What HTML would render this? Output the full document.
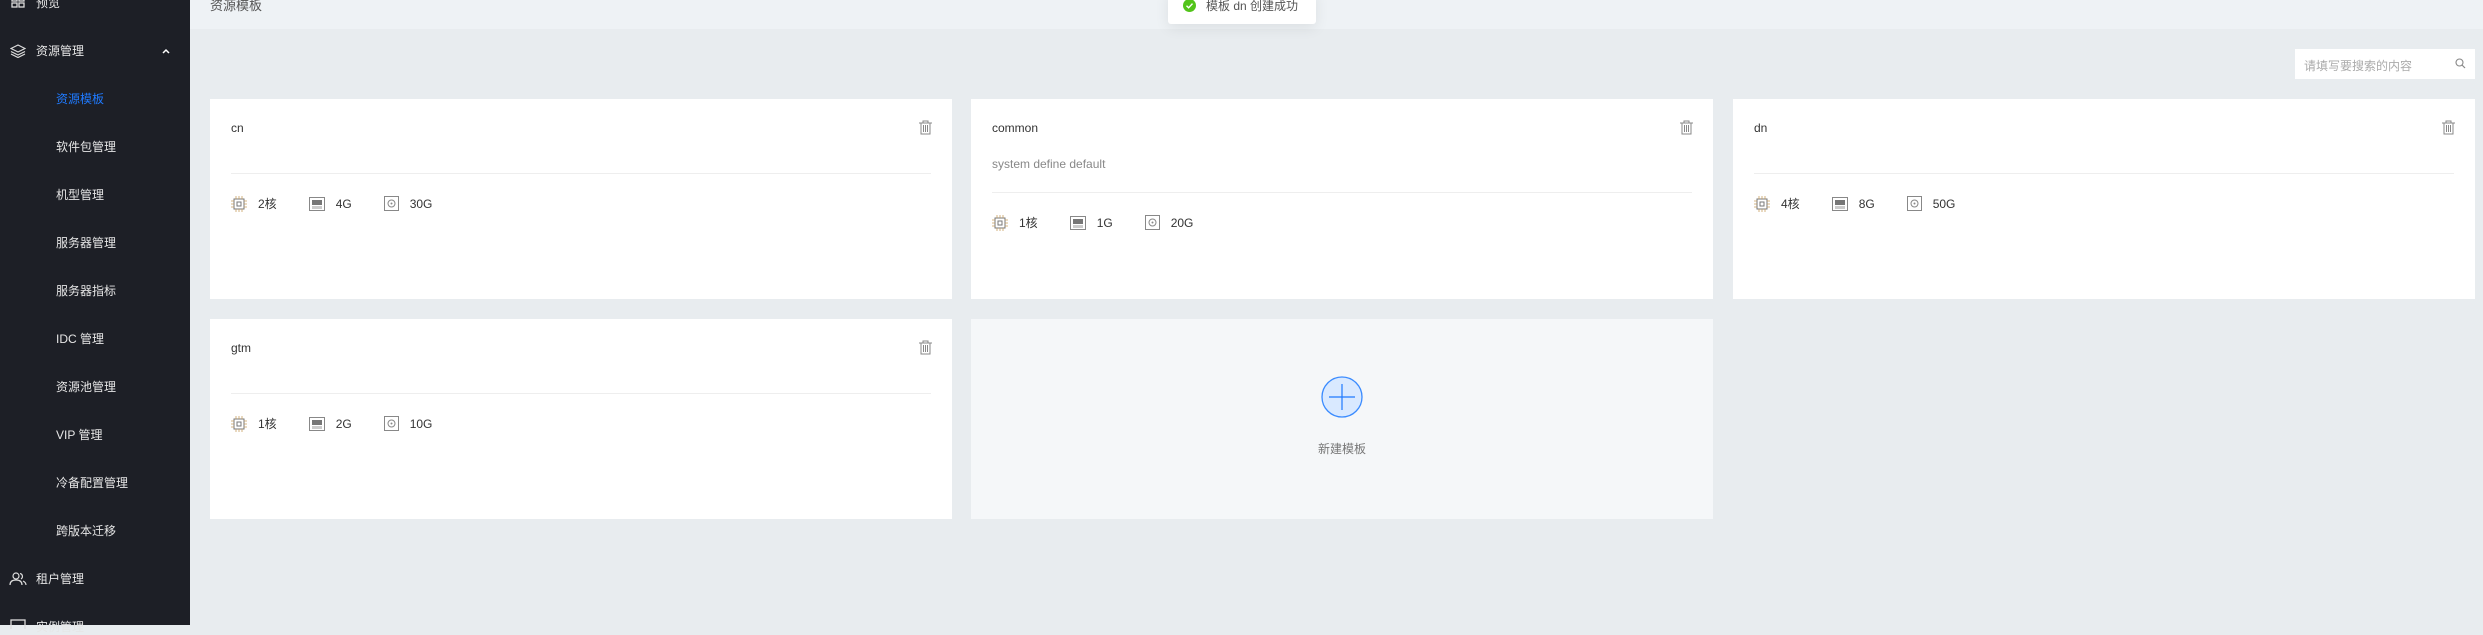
<!DOCTYPE html>
<html><head><meta charset="utf-8"><style>
*{box-sizing:border-box;margin:0;padding:0}
body{width:2483px;height:625px;overflow:hidden;background:#e8ecef;font-family:"Liberation Sans","Noto Sans CJK SC",sans-serif;font-size:12px;color:#333;position:relative}
.side{position:absolute;left:0;top:0;width:190px;height:625px;background:#1d1f26;color:#e6e6e6}
.side .it{position:absolute;left:56px;font-size:12px;line-height:16px;white-space:nowrap}
.side .top{left:36px}
.hdr{position:absolute;left:190px;top:0;width:2293px;height:29px;background:#eef2f5}
.hdr span{position:absolute;left:20px;top:-5px;font-size:13px;color:#555}
.card{position:absolute;background:#fff}
.card .t{position:absolute;left:21px;top:22px;font-size:12px;color:#333}
.card .d{position:absolute;left:21px;top:58px;font-size:12px;color:#888}
.card .hr{position:absolute;left:21px;right:21px;height:1px;background:#eee}
.card .sp{position:absolute;left:21px;display:flex;align-items:center;font-size:12px;color:#333}
.sp svg{margin-right:11px}
.sp .g{margin-right:32px}
.trash{position:absolute;right:20px;top:21px}
</style></head><body>
<div class="side">
<svg style="position:absolute;left:11px;top:-2px" width="14" height="10" viewBox="0 0 14 10"><rect x="1" y="0" width="5" height="3" fill="none" stroke="#ddd" stroke-width="1.3"/><rect x="8" y="0" width="5" height="3" fill="none" stroke="#ddd" stroke-width="1.3"/><rect x="1" y="5" width="5" height="4" fill="none" stroke="#ddd" stroke-width="1.3"/><rect x="8" y="5" width="5" height="4" fill="none" stroke="#ddd" stroke-width="1.3"/></svg>
<div class="it top" style="top:-5px">预览</div>
<svg style="position:absolute;left:10px;top:44px" width="16" height="14" viewBox="0 0 16 14"><path d="M8 1L15 4.5 8 8 1 4.5Z M1 7.5L8 11 15 7.5 M1 10L8 13.5 15 10" fill="none" stroke="#ddd" stroke-width="1.2"/></svg>
<div class="it top" style="top:43px">资源管理</div>
<svg style="position:absolute;left:162px;top:48px" width="8" height="6" viewBox="0 0 8 6"><path d="M1 5L4 2 7 5" fill="none" stroke="#fff" stroke-width="1.5"/></svg>
<div class="it" style="top:91px;color:#1f7aff">资源模板</div>
<div class="it" style="top:139px">软件包管理</div>
<div class="it" style="top:187px">机型管理</div>
<div class="it" style="top:235px">服务器管理</div>
<div class="it" style="top:283px">服务器指标</div>
<div class="it" style="top:331px">IDC 管理</div>
<div class="it" style="top:379px">资源池管理</div>
<div class="it" style="top:427px">VIP 管理</div>
<div class="it" style="top:475px">冷备配置管理</div>
<div class="it" style="top:523px">跨版本迁移</div>
<svg style="position:absolute;left:9px;top:572px" width="18" height="14" viewBox="0 0 18 14"><circle cx="7" cy="4" r="3" fill="none" stroke="#ddd" stroke-width="1.2"/><path d="M1 13C1 9 4 8 7 8S13 9 13 13 M11 1.5A3 3 0 0 1 12 7 M14 9C16 10 17 11 17 13" fill="none" stroke="#ddd" stroke-width="1.2"/></svg>
<div class="it top" style="top:571px">租户管理</div>
<svg style="position:absolute;left:10px;top:619px" width="16" height="10" viewBox="0 0 16 10"><rect x="1" y="1" width="14" height="12" fill="none" stroke="#ddd" stroke-width="1.3"/></svg>
<div class="it top" style="top:619px">实例管理</div>
</div>
<div class="hdr"><span>资源模板</span></div>
<div style="position:absolute;left:1168px;top:-10px;width:148px;height:34px;background:#fff;border-radius:3px;box-shadow:0 4px 14px rgba(0,0,0,.08);white-space:nowrap"><svg style="position:absolute;left:15px;top:9px" width="13" height="13" viewBox="0 0 13 13"><circle cx="6.5" cy="6.5" r="6.5" fill="#52c41a"/><path d="M3.5 6.8L5.6 8.8 9.5 4.6" fill="none" stroke="#fff" stroke-width="1.4"/></svg><span style="position:absolute;left:38px;top:7px;color:#555">模板 dn 创建成功</span></div>
<div style="position:absolute;left:2295px;top:49px;width:180px;height:30px;background:#fff"><span style="position:absolute;left:9px;top:8px;color:#aaa;font-size:12px;white-space:nowrap">请填写要搜索的内容</span><svg style="position:absolute;left:160px;top:9px" width="11" height="11" viewBox="0 0 11 11"><circle cx="4.5" cy="4.5" r="3.5" fill="none" stroke="#888" stroke-width="1.1"/><path d="M7 7L10 10" stroke="#888" stroke-width="1.2"/></svg></div>

<div class="card" style="left:210px;top:99px;width:742px;height:200px">
<div class="t">cn</div><div class="hr" style="top:74px"></div>
<div class="sp" style="top:96px">
<svg width="16" height="16" viewBox="0 0 16 16"><rect x="3" y="3" width="10" height="10" fill="none" stroke="#777"/><rect x="6" y="6" width="4" height="4" fill="none" stroke="#777"/><path d="M5 0v3M8 0v3M11 0v3M5 13v3M8 13v3M11 13v3M0 5h3M0 8h3M0 11h3M13 5h3M13 8h3M13 11h3" stroke="#c9a060" stroke-width=".8"/></svg><span class="g">2核</span>
<svg width="16" height="14" viewBox="0 0 16 14"><rect x=".5" y=".5" width="15" height="13" fill="none" stroke="#888"/><rect x="3" y="3" width="10" height="5" fill="#777"/><path d="M4 9v3M6 9v3M8 9v3M10 9v3M12 9v3" stroke="#999"/></svg><span class="g">4G</span>
<svg width="15" height="15" viewBox="0 0 15 15"><rect x=".5" y=".5" width="14" height="14" fill="none" stroke="#888"/><circle cx="7.5" cy="7.5" r="3.5" fill="none" stroke="#888"/><circle cx="7.5" cy="7.5" r="1" fill="#888"/></svg><span>30G</span>
</div>
<svg class="trash" width="13" height="15" viewBox="0 0 13 15"><path d="M0 3h13M4 3V1h5v2M2 3v11h9V3M4.5 5v7M6.5 5v7M8.5 5v7" fill="none" stroke="#888" stroke-width="1"/></svg>
</div>

<div class="card" style="left:971px;top:99px;width:742px;height:200px">
<div class="t">common</div><div class="d">system define default</div><div class="hr" style="top:93px"></div>
<div class="sp" style="top:115px">
<svg width="16" height="16" viewBox="0 0 16 16"><rect x="3" y="3" width="10" height="10" fill="none" stroke="#777"/><rect x="6" y="6" width="4" height="4" fill="none" stroke="#777"/><path d="M5 0v3M8 0v3M11 0v3M5 13v3M8 13v3M11 13v3M0 5h3M0 8h3M0 11h3M13 5h3M13 8h3M13 11h3" stroke="#c9a060" stroke-width=".8"/></svg><span class="g">1核</span>
<svg width="16" height="14" viewBox="0 0 16 14"><rect x=".5" y=".5" width="15" height="13" fill="none" stroke="#888"/><rect x="3" y="3" width="10" height="5" fill="#777"/><path d="M4 9v3M6 9v3M8 9v3M10 9v3M12 9v3" stroke="#999"/></svg><span class="g">1G</span>
<svg width="15" height="15" viewBox="0 0 15 15"><rect x=".5" y=".5" width="14" height="14" fill="none" stroke="#888"/><circle cx="7.5" cy="7.5" r="3.5" fill="none" stroke="#888"/><circle cx="7.5" cy="7.5" r="1" fill="#888"/></svg><span>20G</span>
</div>
<svg class="trash" width="13" height="15" viewBox="0 0 13 15"><path d="M0 3h13M4 3V1h5v2M2 3v11h9V3M4.5 5v7M6.5 5v7M8.5 5v7" fill="none" stroke="#888" stroke-width="1"/></svg>
</div>

<div class="card" style="left:1733px;top:99px;width:742px;height:200px">
<div class="t">dn</div><div class="hr" style="top:74px"></div>
<div class="sp" style="top:96px">
<svg width="16" height="16" viewBox="0 0 16 16"><rect x="3" y="3" width="10" height="10" fill="none" stroke="#777"/><rect x="6" y="6" width="4" height="4" fill="none" stroke="#777"/><path d="M5 0v3M8 0v3M11 0v3M5 13v3M8 13v3M11 13v3M0 5h3M0 8h3M0 11h3M13 5h3M13 8h3M13 11h3" stroke="#c9a060" stroke-width=".8"/></svg><span class="g">4核</span>
<svg width="16" height="14" viewBox="0 0 16 14"><rect x=".5" y=".5" width="15" height="13" fill="none" stroke="#888"/><rect x="3" y="3" width="10" height="5" fill="#777"/><path d="M4 9v3M6 9v3M8 9v3M10 9v3M12 9v3" stroke="#999"/></svg><span class="g">8G</span>
<svg width="15" height="15" viewBox="0 0 15 15"><rect x=".5" y=".5" width="14" height="14" fill="none" stroke="#888"/><circle cx="7.5" cy="7.5" r="3.5" fill="none" stroke="#888"/><circle cx="7.5" cy="7.5" r="1" fill="#888"/></svg><span>50G</span>
</div>
<svg class="trash" width="13" height="15" viewBox="0 0 13 15"><path d="M0 3h13M4 3V1h5v2M2 3v11h9V3M4.5 5v7M6.5 5v7M8.5 5v7" fill="none" stroke="#888" stroke-width="1"/></svg>
</div>

<div class="card" style="left:210px;top:319px;width:742px;height:200px">
<div class="t">gtm</div><div class="hr" style="top:74px"></div>
<div class="sp" style="top:96px">
<svg width="16" height="16" viewBox="0 0 16 16"><rect x="3" y="3" width="10" height="10" fill="none" stroke="#777"/><rect x="6" y="6" width="4" height="4" fill="none" stroke="#777"/><path d="M5 0v3M8 0v3M11 0v3M5 13v3M8 13v3M11 13v3M0 5h3M0 8h3M0 11h3M13 5h3M13 8h3M13 11h3" stroke="#c9a060" stroke-width=".8"/></svg><span class="g">1核</span>
<svg width="16" height="14" viewBox="0 0 16 14"><rect x=".5" y=".5" width="15" height="13" fill="none" stroke="#888"/><rect x="3" y="3" width="10" height="5" fill="#777"/><path d="M4 9v3M6 9v3M8 9v3M10 9v3M12 9v3" stroke="#999"/></svg><span class="g">2G</span>
<svg width="15" height="15" viewBox="0 0 15 15"><rect x=".5" y=".5" width="14" height="14" fill="none" stroke="#888"/><circle cx="7.5" cy="7.5" r="3.5" fill="none" stroke="#888"/><circle cx="7.5" cy="7.5" r="1" fill="#888"/></svg><span>10G</span>
</div>
<svg class="trash" width="13" height="15" viewBox="0 0 13 15"><path d="M0 3h13M4 3V1h5v2M2 3v11h9V3M4.5 5v7M6.5 5v7M8.5 5v7" fill="none" stroke="#888" stroke-width="1"/></svg>
</div>

<div class="card" style="left:971px;top:319px;width:742px;height:200px;background:#f5f7f9">
<svg style="position:absolute;left:350px;top:57px" width="42" height="42" viewBox="0 0 42 42"><circle cx="21" cy="21" r="20" fill="#d9e9ff" stroke="#3a8bff" stroke-width="1.3"/><path d="M21 8v26M8 21h26" stroke="#1f7aff" stroke-width="1.2"/></svg>
<div style="position:absolute;left:0;width:742px;text-align:center;top:121px;color:#777">新建模板</div>
</div>
</body></html>
